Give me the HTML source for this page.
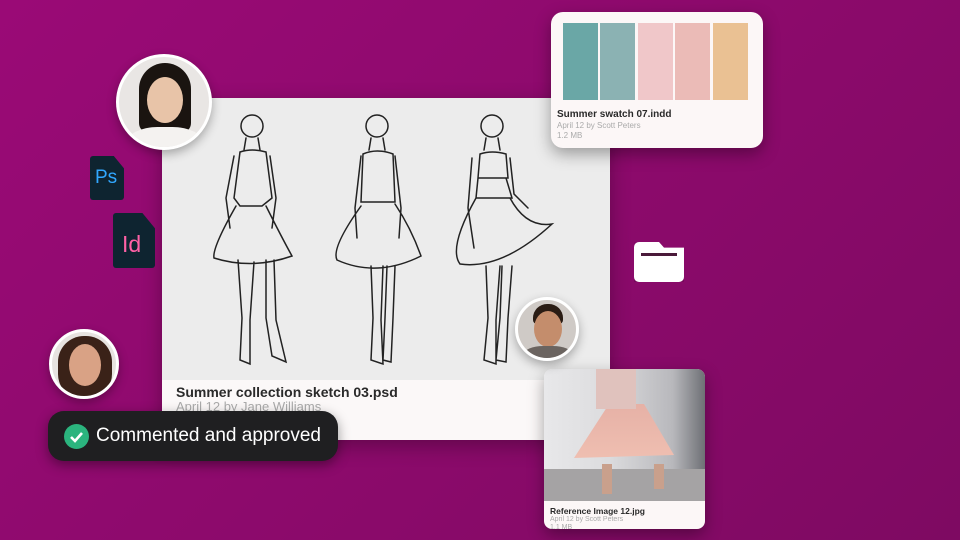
<!DOCTYPE html>
<html><head><meta charset="utf-8"><style>
*{margin:0;padding:0;box-sizing:border-box}
body{width:960px;height:540px;overflow:hidden;background:linear-gradient(135deg,#9a0a76 0%,#8a0a6a 60%,#7e0a62 100%);font-family:"Liberation Sans",sans-serif;position:relative}
.abs{position:absolute}
.main{left:162px;top:98px;width:448px;height:342px;background:#ececec;border-radius:4px;overflow:hidden;box-shadow:0 6px 20px rgba(0,0,0,.3)}
.cap{position:absolute;left:0;right:0;top:282px;bottom:0;background:#fbf8f8}
.swatch{left:551px;top:12px;width:212px;height:136px;background:#fcf7f7;border-radius:12px;box-shadow:0 6px 16px rgba(0,0,0,.35)}
.sw{position:absolute;top:11px;width:35px;height:77px}
.ref{left:544px;top:369px;width:161px;height:160px;background:#fcf7f7;border-radius:8px;overflow:hidden;box-shadow:0 6px 16px rgba(0,0,0,.35)}
.av{border-radius:50%;border:3px solid #fff;overflow:hidden;box-shadow:0 4px 10px rgba(0,0,0,.3)}
.av div{position:absolute}
.toast{left:48px;top:411px;width:290px;height:50px;background:#1f1f21;border-radius:16px;color:#fff;font-size:19px;box-shadow:0 4px 12px rgba(0,0,0,.4)}
.file{width:34px;height:44px;background:#0e2430;border-radius:3px;clip-path:polygon(0 0,70% 0,100% 28%,100% 100%,0 100%)}
</style></head><body>

<div class="abs main">
<svg width="448" height="282" viewBox="0 0 448 282" fill="none" stroke="#222" stroke-width="1.5" stroke-linecap="round">
 <g>
  <circle cx="90" cy="28" r="11"/><path d="M84 40 L82 52 M96 40 L98 52 M78 54 Q90 50 104 54 L110 100 L100 108 L78 108 L72 100Z M72 58 L64 100 L68 130 M108 58 L114 100 L110 130 M74 108 Q50 150 52 160 Q90 172 130 158 Q120 140 104 108 M76 162 L80 220 L78 262 L88 266 L88 222 L92 164 M104 162 L104 220 L110 258 L124 264 L114 222 L112 162"/>
 </g>
 <g transform="translate(125,0)">
  <circle cx="90" cy="28" r="11"/><path d="M84 40 L82 52 M96 40 L98 52 M76 56 Q90 50 106 56 L108 104 L74 104Z M74 58 L68 110 L70 140 M108 58 L114 110 L112 140 M74 108 Q44 150 50 162 Q90 180 134 158 Q124 130 108 106 M84 168 L86 220 L84 262 L96 266 L94 222 L96 168 M100 168 L98 220 L96 262 L104 264 L106 220 L108 168"/>
 </g>
 <g transform="translate(240,0)">
  <circle cx="90" cy="28" r="11"/><path d="M84 40 L82 52 M96 40 L98 52 M78 56 Q90 52 104 56 L106 80 L76 80Z M76 80 L104 80 L110 100 L74 100 Z M70 60 L66 110 L72 150 M108 60 L112 96 L126 110 M74 100 Q46 150 58 166 Q100 172 150 126 Q124 130 108 100 M84 168 L86 220 L82 262 L94 266 L94 222 L98 168 M100 168 L98 220 L94 262 L104 264 L106 220 L110 168"/>
 </g>
</svg>
<div class="cap">
 <div style="position:absolute;left:14px;top:4px;font-size:14px;font-weight:bold;color:#2a2a2a">Summer collection sketch 03.psd</div>
 <div style="position:absolute;left:14px;top:19px;font-size:13px;color:#aaa">April 12 by Jane Williams</div>
</div>
</div>

<div class="abs swatch">
 <div class="sw" style="left:12px;background:#6aa7a6"></div>
 <div class="sw" style="left:49px;background:#8bb2b3"></div>
 <div class="sw" style="left:87px;background:#f0c7c9"></div>
 <div class="sw" style="left:124px;background:#ebbbb7"></div>
 <div class="sw" style="left:162px;background:#eac193"></div>
 <div style="position:absolute;left:6px;top:97px;font-size:10px;font-weight:bold;color:#2a2a2a">Summer swatch 07.indd</div>
 <div style="position:absolute;left:6px;top:109px;font-size:8px;color:#aaa;line-height:10px">April 12 by Scott Peters<br>1.2 MB</div>
</div>

<div class="abs ref">
 <div style="position:absolute;left:0;top:0;width:161px;height:132px;background:linear-gradient(90deg,#e8e8ea 0%,#dcdcde 40%,#b8b8bc 80%,#6e7075 100%)"></div>
 <div style="position:absolute;left:0;top:100px;width:161px;height:32px;background:#a5a3a4"></div>
 <div style="position:absolute;left:30px;top:35px;width:100px;height:60px;background:linear-gradient(180deg,#e6b1a6,#f0c0b2);clip-path:polygon(35% 0,70% 0,100% 85%,0 90%)"></div>
 <div style="position:absolute;left:52px;top:0;width:40px;height:40px;background:#e0c2bd"></div>
 <div style="position:absolute;left:58px;top:95px;width:10px;height:30px;background:#c9a08c"></div>
 <div style="position:absolute;left:110px;top:95px;width:10px;height:25px;background:#c9a08c"></div>
 <div style="position:absolute;left:6px;top:137px;font-size:8.5px;font-weight:bold;color:#2a2a2a">Reference Image 12.jpg</div>
 <div style="position:absolute;left:6px;top:147px;font-size:7px;color:#aaa;line-height:8px">April 12 by Scott Peters<br>1.1 MB</div>
</div>

<div class="abs av" style="left:116px;top:54px;width:96px;height:96px;background:#e9e6e4">
 <div style="left:20px;top:6px;width:52px;height:70px;border-radius:26px 26px 10px 10px;background:#1a1410"></div>
 <div style="left:28px;top:20px;width:36px;height:46px;border-radius:50%;background:#e8c4a8"></div>
 <div style="left:8px;top:70px;width:76px;height:40px;border-radius:40%;background:#f4f2f0"></div>
</div>
<div class="abs av" style="left:49px;top:329px;width:70px;height:70px;background:#e6e3e0">
 <div style="left:6px;top:4px;width:54px;height:64px;border-radius:26px;background:#3a2218"></div>
 <div style="left:17px;top:12px;width:32px;height:42px;border-radius:50%;background:#d9a285"></div>
</div>
<div class="abs av" style="left:515px;top:297px;width:64px;height:64px;background:#cfcac6">
 <div style="left:15px;top:4px;width:30px;height:20px;border-radius:14px 14px 4px 4px;background:#2a1c14"></div>
 <div style="left:16px;top:11px;width:28px;height:36px;border-radius:50%;background:#c48d6c"></div>
 <div style="left:6px;top:46px;width:48px;height:20px;border-radius:40%;background:#6b6460"></div>
</div>

<div class="abs file" style="left:90px;top:156px"><span style="position:absolute;left:5px;top:11px;color:#31a8ff;font-size:19px">Ps</span></div>
<div class="abs file" style="left:113px;top:213px;width:42px;height:55px"><span style="position:absolute;left:9px;top:18px;color:#ff61a6;font-size:23px">Id</span></div>

<div class="abs" style="left:634px;top:242px;width:50px;height:40px;background:#fff;border-radius:5px;clip-path:polygon(0 0,50% 0,60% 14%,100% 14%,100% 100%,0 100%);box-shadow:0 4px 10px rgba(0,0,0,.3)"></div>
<div class="abs" style="left:641px;top:253px;width:36px;height:3px;background:#4a1a3a"></div>

<div class="abs toast">
 <div style="position:absolute;left:16px;top:13px;width:25px;height:25px;border-radius:50%;background:#2bb47e"></div>
 <svg class="abs" style="left:21px;top:19px" width="15" height="13"><path d="M2 7 L6 11 L13 3" stroke="#fff" stroke-width="2.6" fill="none"/></svg>
 <div style="position:absolute;left:48px;top:14px">Commented and approved</div>
</div>
</body></html>
